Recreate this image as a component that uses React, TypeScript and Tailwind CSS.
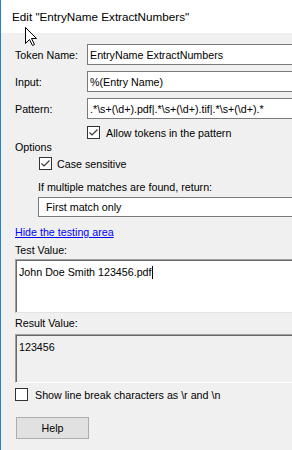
import React from "react";

const font = { fontFamily: "'Liberation Sans', Arial, sans-serif" };

const CheckBox: React.FC<{ checked?: boolean }> = ({ checked }) => (
  <svg width="13" height="13" viewBox="0 0 13 13" className="shrink-0">
    <rect x="0.5" y="0.5" width="12" height="12" fill="#fff" stroke="#333" />
    {checked && (
      <path d="M2.5 6.5 L5 9 L10.5 3.5" fill="none" stroke="#333" strokeWidth="1.1" />
    )}
  </svg>
);

const Field: React.FC<{ label: string; value: string; mt: string }> = ({ label, value, mt }) => (
  <div className={`flex items-center h-[21px] ${mt}`}>
    <div className="w-[72px] shrink-0">{label}</div>
    <div className="flex-1 h-full flex items-center bg-white border border-r-0 border-[#7a7a7a] pl-[2px] whitespace-nowrap overflow-hidden">
      {value}
    </div>
  </div>
);

export default function App() {
  return (
    <div
      className="relative w-[292px] h-[450px] overflow-hidden bg-[#f0f0f0] border-l border-[#1883d7] text-black text-[10.7px] leading-[14px]"
      style={font}
    >
      <div className="h-[33px] bg-white flex items-center pl-[11px] text-[11.7px]">
        Edit "EntryName ExtractNumbers"
      </div>

      <div className="flex flex-col pl-[14px]">
        <Field label="Token Name:" value="EntryName ExtractNumbers" mt="mt-[11px]" />
        <Field label="Input:" value="%(Entry Name)" mt="mt-[6px]" />
        <Field
          label="Pattern:"
          value=".*\s+(\d+).pdf|.*\s+(\d+).tif|.*\s+(\d+).*"
          mt="mt-[6px]"
        />

        <div className="flex items-center gap-[6px] mt-[7px] h-[13px] pl-[72px]">
          <CheckBox checked />
          <span>Allow tokens in the pattern</span>
        </div>

        <div className="mt-[1px]">Options</div>

        <div className="flex items-center gap-[5px] mt-[3px] h-[13px] pl-[24px]">
          <CheckBox checked />
          <span>Case sensitive</span>
        </div>

        <div className="mt-[10px] pl-[23px]">If multiple matches are found, return:</div>

        <div className="mt-[3px] ml-[23px] h-[20px] flex items-center bg-white border border-r-0 border-[#7a7a7a] pl-[7px]">
          First match only
        </div>

        <div className="mt-[8px]">
          <a href="#" className="text-[#0000ff] underline">
            Hide the testing area
          </a>
        </div>

        <div className="mt-[4px]">Test Value:</div>

        <div className="mt-[2px] h-[54px] bg-white border-t border-l border-b border-t-[#a0a0a0] border-l-[#a0a0a0] border-b-[#e3e3e3] shadow-[inset_1px_1px_0_#696969] pl-[3px] pt-[5px]">
          <span>John Doe Smith 123456.pdf</span>
          <span className="inline-block w-px h-[13px] bg-black align-middle -mt-[2px]" />
        </div>

        <div className="mt-[3px]">Result Value:</div>

        <div className="mt-[4px] h-[49px] bg-[#f0f0f0] border-t border-l border-b border-t-[#a0a0a0] border-l-[#a0a0a0] border-b-white shadow-[inset_1px_1px_0_#696969] pl-[3px] pt-[5px]">
          123456
        </div>

        <div className="flex items-center gap-[7px] mt-[5px] h-[13px]">
          <CheckBox />
          <span>Show line break characters as \r and \n</span>
        </div>

        <button className="mt-[16px] ml-[1px] w-[73px] h-[22px] bg-[#e1e1e1] border border-[#adadad] flex items-center justify-center">
          Help
        </button>
      </div>

      <svg
        className="absolute left-[24px] top-[27px]"
        width="13"
        height="20"
        viewBox="0 0 13 20"
      >
        <path
          d="M0.5 0.5 L0.5 16.5 L4.5 12.5 L7.5 18.5 L9.5 17.5 L6.5 11.5 L11.5 11.5 Z"
          fill="#fff"
          stroke="#000"
          strokeLinejoin="miter"
        />
      </svg>
    </div>
  );
}
